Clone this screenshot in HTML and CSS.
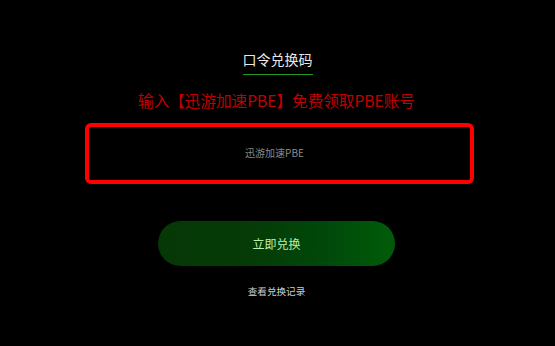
FILE: index.html
```html
<!DOCTYPE html>
<html lang="zh">
<head>
<meta charset="utf-8">
<link rel="stylesheet" href="styles.css">
</head>
<body>
<div class="page">
  <div class="title">口令兑换码</div>
  <div class="hint">输入【迅游加速PBE】免费领取PBE账号</div>
  <div class="code-box"><input class="code-input" type="text" placeholder="迅游加速PBE"></div>
  <button class="redeem">立即兑换</button>
  <a class="history">查看兑换记录</a>
</div>
</body>
</html>
```
FILE: styles.css
```css
html, body {
  margin: 0;
  padding: 0;
  background: #000;
  height: 100%;
}
.page {
  width: 555px;
  height: 346px;
  display: flex;
  flex-direction: column;
  align-items: center;
  font-family: "Noto Sans CJK SC", "Noto Sans", sans-serif;
}
.title {
  margin-top: 49px;
  font-size: 14px;
  line-height: 20px;
  color: #e8e8e8;
  padding-bottom: 5px;
  border-bottom: 1px solid #1f9a1f;
}
.hint {
  margin-top: 14px;
  margin-right: 2px;
  font-size: 15.6px;
  line-height: 22px;
  color: #c00000;
}
.code-box {
  margin-top: 12px;
  margin-left: 4px;
  width: 381px;
  height: 53px;
  border: 4px solid #ff0000;
  border-radius: 6px;
  display: flex;
  align-items: center;
  justify-content: center;
}
.code-input {
  width: 100%;
  box-sizing: border-box;
  padding: 0 10px 0 0;
  margin-top: -2px;
  background: transparent;
  border: none;
  outline: none;
  text-align: center;
  font-family: inherit;
  font-size: 10px;
  color: #ccc;
}
.code-input::placeholder {
  color: #8a8a8a;
}
.redeem {
  margin-top: 37px;
  margin-right: 2px;
  width: 237px;
  height: 45px;
  border: none;
  border-radius: 23px;
  background: linear-gradient(90deg, #063806 0%, #053b06 40%, #00480a 70%, #005c08 100%);
  color: #b8f0b0;
  font-family: inherit;
  font-size: 12px;
}
.history {
  margin-top: 18px;
  margin-right: 2px;
  font-size: 9.6px;
  color: #cfcfcf;
}
```
